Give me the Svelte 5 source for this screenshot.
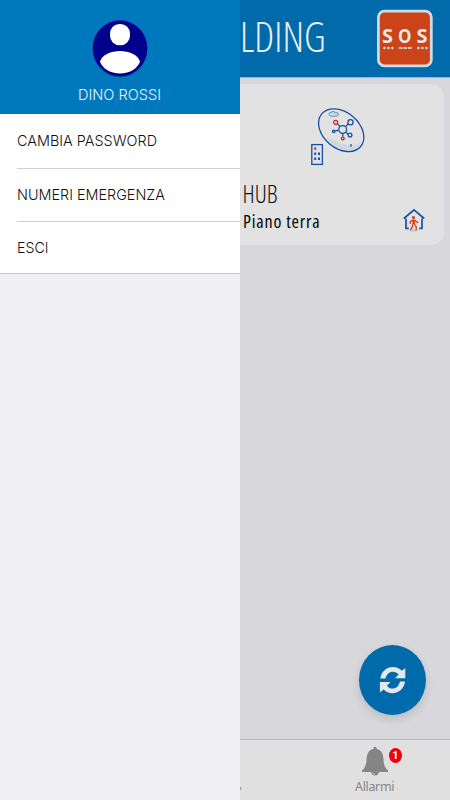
<script>
  const entries = [
    { label: 'CAMBIA PASSWORD', width: 140 },
    { label: 'NUMERI EMERGENZA', width: 148 },
    { label: 'ESCI', width: 31.5 }
  ];
</script>

<div class="app">
  <aside class="drawer">
    <header class="profile">
      <svg class="avatar" width="56" height="58" viewBox="0 0 56 58">
        <ellipse cx="28" cy="28.3" rx="27.3" ry="28" fill="#00008c" />
        <rect x="18" y="4" width="20" height="21.2" rx="9.5" ry="9.5" fill="#fff" />
        <path d="M8 41.5C10 35 19 31 28 31S46 35 48 41.5C46 48 38 53.5 28 53.5S10 48 8 41.5Z" fill="#fff" />
      </svg>
      <svg class="name" width="84" height="20" viewBox="0 0 84 20">
        <text x="0" y="15.2" textLength="83" lengthAdjust="spacingAndGlyphs">DINO ROSSI</text>
      </svg>
    </header>
    <nav>
      {#each entries as entry}
        <div class="entry">
          <svg width="200" height="20" viewBox="0 0 200 20">
            <text x="0" y="15" textLength={entry.width} lengthAdjust="spacingAndGlyphs">{entry.label}</text>
          </svg>
        </div>
      {/each}
    </nav>
  </aside>

  <main>
    <header class="topbar">
      <svg class="title" width="100" height="72" viewBox="0 0 100 72">
        <text x="0" y="52" textLength="85.5" lengthAdjust="spacingAndGlyphs">LDING</text>
      </svg>
      <svg class="sos" width="58" height="60" viewBox="0 0 58 60">
        <rect x="2.4" y="2.2" width="52.9" height="54.6" rx="6" fill="#cb4419" stroke="#d0dae4" stroke-width="2.8" />
        <g class="letters">
          <text x="6" y="34" textLength="11" lengthAdjust="spacingAndGlyphs">S</text>
          <text x="22" y="34" textLength="13.5" lengthAdjust="spacingAndGlyphs">O</text>
          <text x="40.5" y="34" textLength="11" lengthAdjust="spacingAndGlyphs">S</text>
        </g>
        <g fill="#e5e1df">
          <circle cx="8.5" cy="39" r="1.2" /><circle cx="12.4" cy="39" r="1.2" /><circle cx="16.3" cy="39" r="1.2" />
          <rect x="22.8" y="38.2" width="3.8" height="1.6" /><rect x="27.4" y="38.2" width="3.8" height="1.6" /><rect x="32" y="38.2" width="3.8" height="1.6" />
          <circle cx="42.4" cy="39" r="1.2" /><circle cx="46.4" cy="39" r="1.2" /><circle cx="50.4" cy="39" r="1.2" />
        </g>
      </svg>
    </header>

    <section class="content">
      <article class="card">
        <svg class="hub" width="60" height="62" viewBox="308 106 60 62" fill="none" stroke="#1551a3">
          <path d="M324 138C335 151 350 154 358 147L362 140C358 148 344 146 332 139Z" fill="#d1d7de" stroke="none" />
          <ellipse cx="341.2" cy="130.2" rx="25.4" ry="18" transform="rotate(40 341.2 130.2)" stroke-width="1.3" />
          <path d="M330 112.5q3.5-2 6 0q3 .4 2.5 2.3q-1 1.700-5 1.5q-4 .2-4.5-1.5q-.3-1.8 1-2.3Z" stroke="#668fbd" stroke-width="1" fill="#cbd7e2" />
          <g stroke-width="1.3">
            <path d="M345.5 126.5l2.7-2.4M340 126.5l-2.4-2.4M338.500 130.2l-3.3.8M345.2 132l2.8 1.9M342.8 133.5v3" />
            <circle cx="342.7" cy="129.5" r="3.9" />
            <circle cx="350.5" cy="122.3" r="2.6" />
            <circle cx="350" cy="135" r="1.9" />
            <circle cx="333.7" cy="131.3" r="1.2" />
            <circle cx="335.7" cy="122.3" r="2" stroke="#d1222b" />
            <circle cx="342.8" cy="138.5" r="1.4" stroke="#d1222b" />
          </g>
          <path d="M351 144v2.8" stroke-width="1.2" />
          <rect x="311.8" y="144.6" width="10.6" height="19.8" stroke-width="1.3" />
          <g stroke="none" fill="#1551a3">
            <rect x="314.2" y="147.3" width="2" height="2.5" fill="#d72a23" />
            <rect x="314.2" y="152.5" width="2" height="2.5" /><rect x="318" y="152.5" width="2" height="2.5" />
            <rect x="314.2" y="157.5" width="2" height="2.5" /><rect x="318" y="157.5" width="2" height="2.5" />
          </g>
        </svg>
        <div class="details">
          <svg class="place" width="100" height="60" viewBox="0 0 100 60">
            <text class="hub-name" x="2.6" y="26" textLength="35" lengthAdjust="spacingAndGlyphs">HUB</text>
            <text class="floor" x="3.1" y="51" textLength="76.5" lengthAdjust="spacing">Piano terra</text>
          </svg>
          <svg class="house" width="24" height="26" viewBox="402 207 24 26" fill="none">
            <ellipse cx="414" cy="230.5" rx="4" ry="1.2" fill="#c7c9cc" />
            <path d="M408.8 228.3H406V218.6M403.8 218.5L414 209.8L424.2 218.5M422 218.6V228.3H419.2" stroke="#1453a5" stroke-width="1.7" />
            <circle cx="413.5" cy="217.5" r="1.6" fill="#d43b16" />
            <path d="M412.5 219.5h2l.6 4.6h-2.7Z" fill="#d43b16" />
            <path d="M412.6 220l-2.2 1.6-.3 2.3M414.5 220l2.1 1.9 1.7.9M413 224l-.8 3.2-1.9 3.1M414.4 224l1.8 2.6v3.7" stroke="#d43b16" stroke-width="1.3" />
          </svg>
        </div>
      </article>
      <button class="refresh" aria-label="Aggiorna">
        <svg width="28" height="28" viewBox="0 0 28 28">
          <path d="M1.300 12.6C2.300 5.500 7.500 1 13.800 1C17.600 1 20.600 2.500 22.900 4.800L26.300 2V12.200H16L19.600 8.500C18.100 6.700 16.200 5.700 13.800 5.700C10.300 5.700 7.500 8 6.500 12.600Z" />
          <path d="M26.100 15.600C25 22.700 20 27.300 13.700 27.300C9.800 27.300 6.900 25.800 4.600 23.500L.9 26.500V15.900H11.400L7.900 19.700C9.300 21.600 11.300 22.600 13.700 22.600C17.200 22.600 19.900 20.100 21 15.600Z" />
        </svg>
      </button>
    </section>

    <footer class="tabs">
      <span class="neighbour"></span>
      <div class="alarm">
        <svg width="28" height="31" viewBox="0 0 28 31">
          <path d="M14 .8Q15.700.8 15.700 3Q22.200 4.300 22.500 13Q22.600 21 27 24.500V26H1V24.500Q5.400 21 5.500 13Q5.800 4.300 12.300 3Q12.300.8 14 .8Z" fill="#858585" />
          <path d="M10.200 26Q10.500 29.500 14 29.500T17.800 26Z" fill="#858585" />
          <path d="M11.800 26.5q.2 1.700 2.200 1.800" fill="none" stroke="#dedede" stroke-width=".8" />
        </svg>
        <span class="badge">1</span>
        <svg class="tab-label" width="42" height="18" viewBox="0 0 42 18">
          <text x="1" y="13.6" textLength="39.500" lengthAdjust="spacing">Allarmi</text>
        </svg>
      </div>
    </footer>
  </main>
</div>

<style>
  :global(body) { margin: 0; }
  .app { display: flex; width: 450px; height: 800px; overflow: hidden; background: #efeff4; }
  svg { display: block; flex: none; }
  .drawer { width: 240px; flex: none; font: 15px Inter, sans-serif; }
  .profile { height: 114px; box-sizing: border-box; padding-top: 20px; background: #0078bd; display: flex; flex-direction: column; align-items: center; border-bottom: 1px solid #0874b2; }
  .avatar { filter: drop-shadow(0 1px .5px #00528a); }
  .name { margin-top: 7px; }
  .name text { font-size: 14.5px; fill: #e6f4fd; font-weight: 300; }
  nav { background: #fff; border-bottom: 1px solid #c8c7cc; height: 160px; box-sizing: border-box; }
  .entry { height: 55px; box-sizing: border-box; margin-left: 17px; border-bottom: 1px solid #d0d0d3; padding-top: 17px; }
  .entry + .entry { height: 53px; padding-top: 15.5px; }
  .entry:last-child { border: 0; height: 50px; padding-top: 15.5px; }
  .entry text { font-size: 15px; font-weight: 350; fill: #111; }
  main { width: 210px; flex: none; display: flex; flex-direction: column; background: #d7d7dc; font-family: "Open Sans", sans-serif; }
  .topbar { height: 78px; box-sizing: border-box; background: #006aaa; display: flex; align-items: flex-start; border-bottom: 1px solid #a9b1bf; }
  .title text { font: 300 43px "Open Sans", sans-serif; font-stretch: 75%; fill: #eee; }
  .sos { margin: 9px 0 0 36px; }
  .letters text { font: 700 19px "Open Sans", sans-serif; fill: #e9e6e4; }
  .content { flex: 1; padding-top: 6px; display: flex; flex-direction: column; justify-content: space-between; }
  .card { width: 204px; height: 161px; box-sizing: border-box; padding-top: 22px; background: #e2e2e2; border-radius: 0 13px 13px 0; display: flex; flex-direction: column; }
  .hub { margin-left: 68px; }
  .details { display: flex; margin-top: 9px; }
  .hub-name { font: 300 25px "Open Sans", sans-serif; font-stretch: 75%; fill: #111; }
  .floor { font: 400 18px "Open Sans", sans-serif; font-stretch: 75%; fill: #050505; }
  .house { margin: 30px 0 0 62px; }
  .refresh { width: 67px; height: 70px; margin: 0 0 24px 119px; padding: 0; border: 0; border-radius: 50%; background: #006aaa; box-shadow: 0 4px 10px #0002; display: flex; align-items: center; justify-content: center; }
  .refresh path { fill: #e4e8eb; }
  .tabs { height: 61px; box-sizing: border-box; border-top: 1px solid #b7b7bb; background: #e0e0e0; display: flex; align-items: flex-start; }
  .neighbour { width: 1px; height: 3px; background: #999; margin-top: 47px; }
  .alarm { position: relative; margin-left: 113px; width: 42px; display: flex; flex-direction: column; align-items: center; padding-top: 6px; }
  .badge { position: absolute; top: 8px; left: 35px; width: 13px; height: 15px; border-radius: 50%; background: #f00009; color: #fff; font: 700 11px/15px Roboto, sans-serif; text-align: center; }
  .tab-label text { font: 12.5px "Noto Sans", sans-serif; fill: #868686; }
</style>
